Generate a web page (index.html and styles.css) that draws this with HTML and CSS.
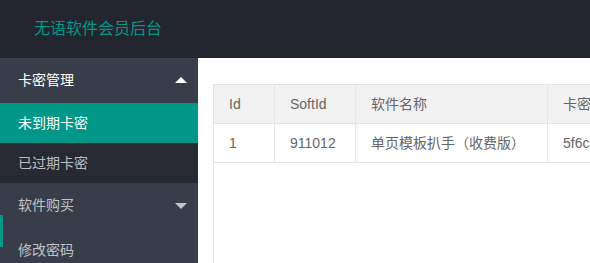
FILE: index.html
```html
<!doctype html>
<html lang="zh-CN">
  <head>
    <meta charset="UTF-8" />
    <meta name="viewport" content="width=device-width, initial-scale=1.0" />
    <title>无语软件会员后台</title>
    <link rel="stylesheet" href="styles.css">
  </head>
  <body>
    <div class="layout">
      <header class="header">
        <div class="logo">无语软件会员后台</div>
      </header>

      <div class="main">
        <aside class="side">
          <ul class="nav-tree">
            <li class="nav-item nav-itemed">
              <a href="#" class="nav-link">卡密管理<span class="nav-more up"></span></a>
              <dl class="nav-child">
                <dd class="this"><a href="#">未到期卡密</a></dd>
                <dd><a href="#">已过期卡密</a></dd>
              </dl>
            </li>
            <li class="nav-item">
              <a href="#" class="nav-link">软件购买<span class="nav-more"></span></a>
            </li>
            <li class="nav-item">
              <a href="#" class="nav-link">修改密码</a>
            </li>
          </ul>
          <span class="nav-bar"></span>
        </aside>

        <section class="body">
          <div class="table-view">
            <table class="data-table">
              <thead>
                <tr>
                  <th class="col-id">Id</th>
                  <th class="col-soft fixed-edge">SoftId</th>
                  <th class="col-name">软件名称</th>
                  <th class="col-card">卡密</th>
                </tr>
              </thead>
              <tbody>
                <tr>
                  <td>1</td>
                  <td class="fixed-edge">911012</td>
                  <td>单页模板扒手（收费版）</td>
                  <td>5f6c0a93e1b24d7c</td>
                </tr>
              </tbody>
            </table>
          </div>
        </section>
      </div>
    </div>
  </body>
</html>
```

FILE: styles.css
```css
/* Admin layout: dark header, side nav tree, table body */
html,
body {
  margin: 0;
  height: 100%;
  overflow: hidden;
}
body {
  font-family: "Liberation Sans", "Noto Sans CJK SC", sans-serif;
  font-size: 14px;
  color: #666;
  background-color: #fff;
}
a {
  text-decoration: none;
  color: inherit;
}
ul,
dl,
dd {
  margin: 0;
  padding: 0;
  list-style: none;
}
.layout {
  display: flex;
  flex-direction: column;
  height: 100%;
}
.header {
  height: 58px;
  flex-shrink: 0;
  background-color: #23262e;
}
.logo {
  width: 196px;
  line-height: 58px;
  text-align: center;
  font-size: 16px;
  color: #009688;
}
.main {
  display: flex;
  flex: 1;
  min-height: 0;
}

/* Side nav */
.side {
  position: relative;
  width: 198px;
  flex-shrink: 0;
  background-color: #393d49;
}
.nav-link {
  position: relative;
  display: block;
  height: 45px;
  line-height: 45px;
  padding-left: 18px;
  color: rgba(255, 255, 255, 0.7);
}
.nav-itemed > .nav-link {
  color: #fff;
}
.nav-more {
  position: absolute;
  right: 11px;
  top: 20px;
  width: 0;
  height: 0;
  border: 6px solid transparent;
  border-top-color: rgba(255, 255, 255, 0.7);
  border-bottom-width: 0;
}
.nav-more.up {
  top: 19px;
  border-top-width: 0;
  border-bottom-width: 6px;
  border-top-color: transparent;
  border-bottom-color: #fff;
}
.nav-child {
  background-color: rgba(0, 0, 0, 0.3);
}
.nav-child a {
  display: block;
  height: 40px;
  line-height: 40px;
  padding-left: 18px;
  color: rgba(255, 255, 255, 0.7);
}
.nav-child .this a {
  background-color: #009688;
  color: #fff;
}
/* hover indicator bar */
.nav-bar {
  position: absolute;
  left: 0;
  top: 157px;
  width: 3px;
  height: 32px;
  background-color: #009688;
}

/* Body + table */
.body {
  flex: 1;
  min-width: 0;
  padding: 26px 0 0 15px;
  overflow: hidden;
}
.table-view {
  height: 100%;
  border-left: 1px solid #e6e6e6;
  border-top: 1px solid #e6e6e6;
}
.data-table {
  border-collapse: separate;
  border-spacing: 0;
  table-layout: fixed;
  width: 500px;
}
.data-table th,
.data-table td {
  box-sizing: border-box;
  padding: 9px 15px;
  line-height: 20px;
  text-align: left;
  font-weight: normal;
  white-space: nowrap;
  overflow: hidden;
  text-spacing-trim: space-all;
  border-right: 1px solid #e6e6e6;
  border-bottom: 1px solid #e6e6e6;
}
.data-table th {
  background-color: #f2f2f2;
}
.col-id {
  width: 61px;
}
.col-soft {
  width: 81px;
}
.col-name {
  width: 192px;
}
.col-card {
  width: 166px;
}
.fixed-edge {
  box-shadow: 2px 0 3px rgba(0, 0, 0, 0.05);
}
```
